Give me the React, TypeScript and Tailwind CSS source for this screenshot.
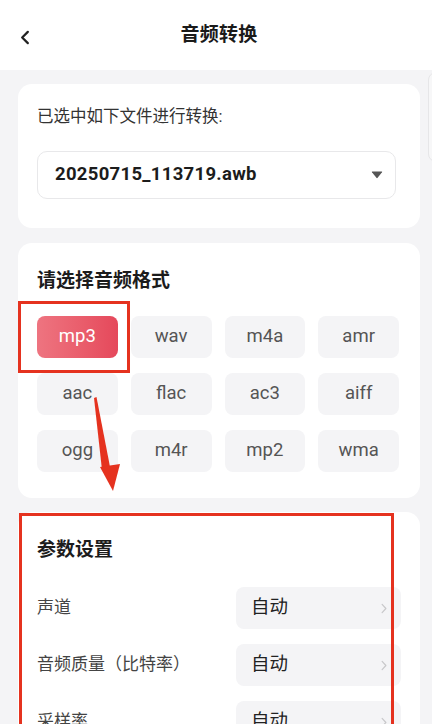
import React from 'react';

const formats = ['mp3', 'wav', 'm4a', 'amr', 'aac', 'flac', 'ac3', 'aiff', 'ogg', 'm4r', 'mp2', 'wma'];

const params = [
  { label: '声道', value: '自动' },
  { label: '音频质量（比特率）', value: '自动' },
  { label: '采样率', value: '自动' },
];

const Chevron: React.FC<{ className?: string }> = ({ className }) => (
  <svg viewBox="0 0 8 14" className={className} fill="none" stroke="currentColor" strokeWidth={1.6} strokeLinecap="round" strokeLinejoin="round">
    <polyline points="1.5,1.5 6.5,7 1.5,12.5" />
  </svg>
);

export default function App() {
  return (
    <div
      className="relative w-[432px] h-[724px] overflow-hidden bg-[#f4f4f6] text-[#222]"
      style={{ fontFamily: 'Roboto, "Noto Sans CJK SC", sans-serif' }}
    >
      {/* Header */}
      <div className="relative h-[70px] bg-white flex items-center justify-center">
        <svg viewBox="0 0 10 16" className="absolute left-[20px] top-[30px] w-[10px] h-[15px]" fill="none" stroke="#222" strokeWidth={2.4} strokeLinecap="round" strokeLinejoin="round">
          <polyline points="8,2 2,8 8,14" />
        </svg>
        <span className="text-[19px] font-bold tracking-[0.3px] text-[#1a1a1a] ml-[6px]">音频转换</span>
      </div>

      {/* side edge of neighbouring panel */}
      <div className="absolute right-[-6px] top-[72px] w-[10px] h-[90px] rounded-l-[8px] border border-[#e6e6e8] bg-[#f7f7f8]" />

      <div className="px-[18px] pr-[12px] flex flex-col gap-[14px] pt-[14px]">
        {/* Card 1 */}
        <div className="bg-white rounded-[14px] pl-[19px] pr-[24px] pt-[22px] pb-[29px]">
          <div className="text-[16.5px] leading-[22px] text-[#333]">已选中如下文件进行转换:</div>
          <div className="mt-[23px] h-[48px] rounded-[10px] border border-[#e8e8ea] flex items-center justify-between pl-[17px] pr-[12px]">
            <span className="text-[18.5px] font-bold text-[#1c1c1c] tracking-[0.3px]">20250715_113719.awb</span>
            <svg viewBox="0 0 12 8" className="w-[12px] h-[8px]" fill="#555">
              <path d="M1 1.2 Q0.4 0.4 1.4 0.4 H10.6 Q11.6 0.4 11 1.2 L6.6 6.8 Q6 7.5 5.4 6.8 Z" />
            </svg>
          </div>
        </div>

        {/* Card 2 */}
        <div className="bg-white rounded-[14px] pl-[19px] pr-[21px] pt-[26px] pb-[26px] mt-[1px]">
          <div className="text-[19px] leading-[24px] font-bold text-[#1c1c1c]">请选择音频格式</div>
          <div className="mt-[23px] grid grid-cols-4 gap-x-[13px] gap-y-[15px]">
            {formats.map((f, i) =>
              i === 0 ? (
                <div key={f} className="h-[42px] rounded-[8px] bg-gradient-to-r from-[#ee7480] to-[#e5485b] flex items-center justify-center text-[18.5px] text-white">
                  {f}
                </div>
              ) : (
                <div key={f} className="h-[42px] rounded-[8px] bg-[#f4f4f6] flex items-center justify-center text-[18.5px] text-[#555]">
                  {f}
                </div>
              )
            )}
          </div>
        </div>

        {/* Card 3 */}
        <div className="bg-white rounded-[14px] pl-[19px] pr-[19px] pt-[26px] pb-[20px]">
          <div className="text-[19px] leading-[24px] font-bold text-[#1c1c1c]">参数设置</div>
          <div className="mt-[25px] flex flex-col gap-[15px]">
            {params.map((p) => (
              <div key={p.label} className="flex items-center justify-between">
                <span className="text-[17px] text-[#444]">{p.label}</span>
                <div className="w-[165px] h-[42px] rounded-[8px] bg-[#f4f4f6] flex items-center justify-between pl-[15px] pr-[14px]">
                  <span className="text-[18.5px] text-[#222]">{p.value}</span>
                  <Chevron className="w-[6px] h-[11px] text-[#c8c8ca]" />
                </div>
              </div>
            ))}
          </div>
        </div>
      </div>

      {/* Annotations */}
      <div className="absolute left-[18px] top-[301px] w-[112px] h-[72px] border-[3px] border-[#e5321f]" />
      <svg className="absolute left-0 top-0 w-[432px] h-[724px] pointer-events-none" viewBox="0 0 432 724">
        <polygon points="94,398 96.5,397 111,472 102,470" fill="#e5321f" />
        <polygon points="100,467 120,464 113,491" fill="#e5321f" />
      </svg>
      <div className="absolute left-[19px] top-[513px] w-[375px] h-[220px] border-[3px] border-[#e5321f]" />
    </div>
  );
}
